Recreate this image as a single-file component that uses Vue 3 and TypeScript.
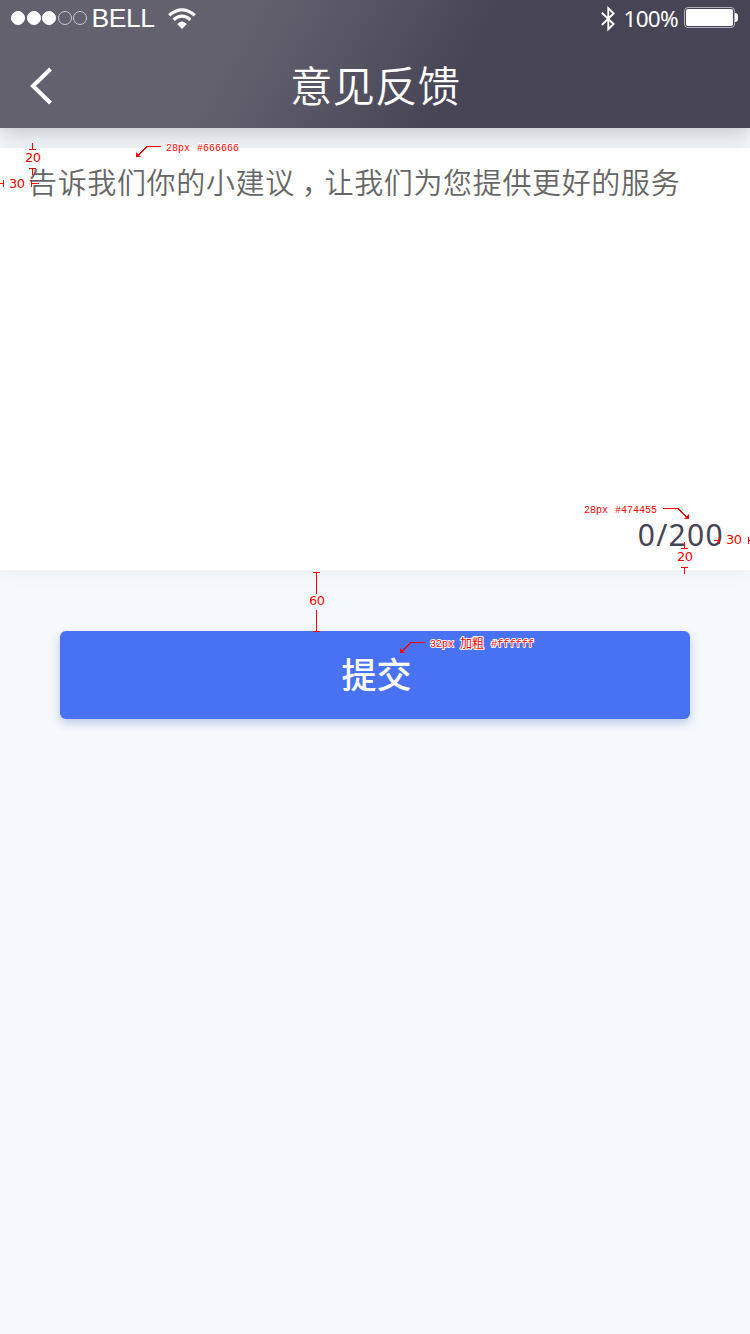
<script setup lang="ts">
import { ref } from 'vue'

const limit = 200
const content = ref('')
const signal: boolean[] = [true, true, true, false, false]
</script>

<template>
  <main class="screen">
    <header class="header">
      <div class="status">
        <div class="dots">
          <i v-for="(on, i) in signal" :key="i" class="dot" :class="{ on }"></i>
        </div>
        <span class="carrier">BELL</span>
        <svg class="wifi" width="28" height="22" viewBox="0 0 28 22" fill="none" stroke="#fff" stroke-width="3.2">
          <path d="M1.2 7.2Q14-3.6 26.8 7.2" />
          <path d="M5.6 11.8Q14 4.6 22.4 11.8" />
          <path d="M9.2 16Q14 11 18.800 16L14 21Z" fill="#fff" stroke="none" />
        </svg>
        <svg class="bluetooth" width="14" height="26" viewBox="0 0 14 26" fill="none" stroke="#fff" stroke-width="1.9">
          <path d="M.8 6.7 12.600 18 7.300 23.200V2.200l5.300 5.300L.8 19" />
        </svg>
        <span class="percent">100%</span>
        <div class="battery"><i></i></div>
      </div>
      <div class="nav">
        <svg class="back" width="24" height="38" viewBox="0 0 24 38" fill="none" stroke="#fff" stroke-width="4">
          <path d="M21.500 2 4 19l17.500 17" />
        </svg>
        <h1>意见反馈</h1>
      </div>
    </header>

    <section class="editor">
      <p v-if="!content" class="placeholder">告诉我们你的小建议<span class="comma">，</span>让我们为您提供更好的服务</p>
      <p class="counter">{{ content.length }}/{{ limit }}</p>
    </section>

    <button class="submit" type="button">提交</button>

    <svg class="notes" width="750" height="1334" viewBox="0 0 750 1334">
      <g fill="none" stroke="#f00" stroke-width="1" shape-rendering="crispEdges">
        <path d="M29 149.5h7M32.5 143v6M29 168.5h7M32.5 169v6" />
        <path d="M0 183.5h3M3.5 180v7M31.5 180v7M32 183.5h7" />
        <path d="M681 548.5h7M684.5 542v6M681 567.5h7M684.5 568v6" />
        <path d="M714 540.5h5M719.5 537v7M748.5 537v7M749 540.5h1" />
        <path d="M313 572.5h7M313 631.5h7M316.5 573v21M316.5 610v21" />
        <path d="M161 146.5h-14l-9 9M663 508.5h15l9 9M425 642.5h-14l-9 9" />
      </g>
      <g fill="#f00">
        <path d="M136 152v5h5zM689 514v5h-5zM400 648v5h5z" />
      </g>
      <g class="measure">
        <text x="25" y="162" textLength="16">20</text>
        <text x="9" y="187.500" textLength="16">30</text>
        <text x="677" y="561" textLength="16">20</text>
        <text x="726" y="544" textLength="16">30</text>
        <text x="309" y="605" textLength="16">60</text>
      </g>
      <g class="spec">
        <text x="166" y="151" textLength="24" lengthAdjust="spacingAndGlyphs">28px</text>
        <text x="197" y="151" textLength="42" lengthAdjust="spacingAndGlyphs">#666666</text>
        <text x="584" y="513" textLength="24" lengthAdjust="spacingAndGlyphs">28px</text>
        <text x="615" y="513" textLength="42" lengthAdjust="spacingAndGlyphs">#474455</text>
        <text x="430" y="647" textLength="24" lengthAdjust="spacingAndGlyphs">32px</text>
        <text class="cjk" x="460" y="648">加粗</text>
        <text x="491" y="647" textLength="43" lengthAdjust="spacingAndGlyphs">#ffffff</text>
      </g>
    </svg>
  </main>
</template>

<style>
body {
  margin: 0;
  background: #f5f9fc;
}
</style>

<style scoped>
.screen {
  position: relative;
  width: 750px;
  height: 1334px;
  overflow: hidden;
  background: #f5f9fc;
  font-family: "Noto Sans CJK SC", sans-serif;
}
.header {
  position: relative;
  z-index: 1;
  height: 128px;
  background: linear-gradient(120deg, #64616f 32%, #474455 62%);
  box-shadow: 0 4px 20px rgba(71, 68, 85, 0.32);
  color: #fff;
}
.status {
  display: flex;
  align-items: center;
  height: 36px;
  padding: 0 15px 0 11px;
}
.dots {
  display: flex;
  gap: 1.6px;
}
.dot {
  box-sizing: border-box;
  width: 14px;
  height: 14px;
  border: 1px solid #c9c8ce;
  border-radius: 50%;
}
.dot.on {
  background: #fff;
  border-color: #fff;
}
.carrier {
  width: 64px;
  margin-left: 4px;
  font: 26.500px/36px "Liberation Sans", Arial, sans-serif;
  letter-spacing: -0.4px;
}
.wifi {
  margin: 2px 0 0 13px;
}
.bluetooth {
  margin: 2px 0 0 auto;
}
.percent {
  width: 55px;
  margin: 1px 5.500px 0 9px;
  font: 22.500px/34px "Noto Sans", sans-serif;
  letter-spacing: -0.7px;
  white-space: nowrap;
}
.battery {
  position: relative;
  box-sizing: border-box;
  width: 51px;
  height: 21px;
  margin-top: -1px;
  padding: 1px;
  border: 1px solid #b5b4bc;
  border-radius: 4px;
}
.battery i {
  display: block;
  height: 17px;
  border-radius: 2px;
  background: #fff;
}
.battery::after {
  content: "";
  position: absolute;
  top: 5px;
  right: -4px;
  width: 3px;
  height: 9px;
  border-radius: 0 3px 3px 0;
  background: #fff;
}
.nav {
  display: grid;
  grid-template-columns: 60px 1fr 60px;
  align-items: center;
  height: 100px;
}
.back {
  margin-left: 29px;
}
h1 {
  margin: -4px 0 0;
  font-size: 42.500px;
  line-height: 60px;
  font-weight: 350;
  text-align: center;
}
.editor {
  display: flex;
  flex-direction: column;
  justify-content: space-between;
  box-sizing: border-box;
  height: 422px;
  margin-top: 20px;
  padding: 12px 26px 14px 28px;
  background: #fff;
  box-shadow: 0 0 20px rgba(71, 68, 85, 0.07);
}
p {
  margin: 0;
}
.placeholder {
  color: #666;
  font-size: 29px;
  line-height: 42px;
  font-weight: 350;
  letter-spacing: 0.65px;
  white-space: nowrap;
}
.comma {
  margin: 0 -7px 0 7px;
}
.counter {
  color: #474455;
  font: 30px/42px "Noto Sans", sans-serif;
  letter-spacing: 1.3px;
  text-align: right;
}
.submit {
  display: block;
  width: 630px;
  height: 88px;
  margin: 61px auto 0;
  padding: 0 0 4px 3px;
  border: 0;
  border-radius: 6px;
  background: #4872f2;
  box-shadow: 0 4px 10px rgba(71, 90, 200, 0.32);
  color: #fff;
  font: 500 35px/84px "Noto Sans CJK SC", sans-serif;
}
.notes {
  position: absolute;
  z-index: 2;
  top: 0;
  left: 0;
}
.notes text {
  fill: #f00;
  stroke: #fff;
  stroke-width: 2px;
  stroke-linejoin: round;
  paint-order: stroke;
}
.measure {
  font: 13px "DejaVu Sans", sans-serif;
}
.spec {
  font: 11.500px "Liberation Mono", monospace;
}
.cjk {
  font: 12px "Noto Sans CJK SC", sans-serif;
}
</style>
